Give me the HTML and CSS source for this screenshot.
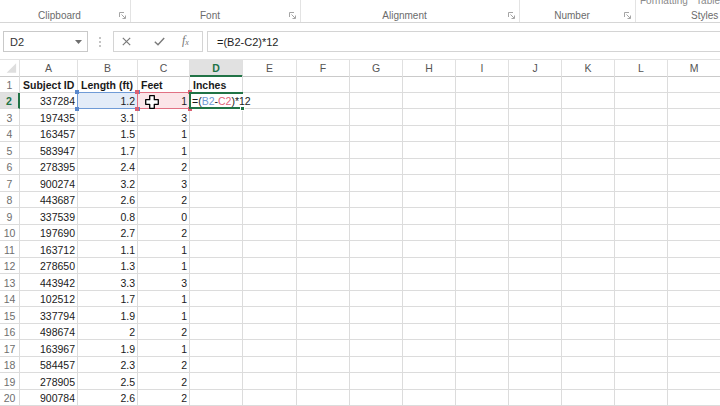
FILE: index.html
```html
<!DOCTYPE html>
<html>
<head>
<meta charset="utf-8">
<title>Excel sheet</title>
<link rel="stylesheet" href="styles.css">
</head>
<body>
<div class="app">
  <div class="ribbon">
    <div class="group g-clip">
      <div class="cmds"></div>
      <div class="gfoot"><span class="glabel">Clipboard</span><svg class="launch" viewBox="0 0 7 7"><path d="M0.5 5V0.5H5" fill="none" stroke="#a5a5a5"/><path d="M2.5 2.5L6.2 6.2M6.5 3.5V6.5H3.5" fill="none" stroke="#a5a5a5"/></svg></div>
    </div>
    <div class="group g-font">
      <div class="cmds"></div>
      <div class="gfoot"><span class="glabel">Font</span><svg class="launch" viewBox="0 0 7 7"><path d="M0.5 5V0.5H5" fill="none" stroke="#a5a5a5"/><path d="M2.5 2.5L6.2 6.2M6.5 3.5V6.5H3.5" fill="none" stroke="#a5a5a5"/></svg></div>
    </div>
    <div class="group g-align">
      <div class="cmds"></div>
      <div class="gfoot"><span class="glabel">Alignment</span><svg class="launch" viewBox="0 0 7 7"><path d="M0.5 5V0.5H5" fill="none" stroke="#a5a5a5"/><path d="M2.5 2.5L6.2 6.2M6.5 3.5V6.5H3.5" fill="none" stroke="#a5a5a5"/></svg></div>
    </div>
    <div class="group g-num">
      <div class="cmds"></div>
      <div class="gfoot"><span class="glabel">Number</span><svg class="launch" viewBox="0 0 7 7"><path d="M0.5 5V0.5H5" fill="none" stroke="#a5a5a5"/><path d="M2.5 2.5L6.2 6.2M6.5 3.5V6.5H3.5" fill="none" stroke="#a5a5a5"/></svg></div>
    </div>
    <div class="group g-styles">
      <div class="cmds"><span class="cmd-fmt">Formatting</span><span class="cmd-ta">Table</span></div>
      <div class="gfoot"><span class="glabel styles-label">Styles</span></div>
    </div>
  </div>

  <div class="fbar">
    <div class="namebox"><span>D2</span><svg class="dd" viewBox="0 0 7 4"><polygon points="0,0 7,0 3.5,4" fill="#6e6e6e"/></svg></div>
    <div class="grip"><i></i><i></i><i></i></div>
    <div class="fbtns">
      <svg class="ic-x" viewBox="0 0 9 9"><path d="M0.8 0.8L8.2 8.2M8.2 0.8L0.8 8.2" stroke="#7a7a7a" stroke-width="1.2" fill="none"/></svg>
      <svg class="ic-ok" viewBox="0 0 11 9"><path d="M0.8 4.8L4 7.8L10.2 1" stroke="#7a7a7a" stroke-width="1.4" fill="none"/></svg>
      <span class="fx">f<sub>x</sub></span>
    </div>
    <div class="finput">=(B2-C2)*12</div>
  </div>

  <div class="sheet">
    <div class="row head">
      <span class="corner"><svg viewBox="0 0 20 16" width="20" height="16"><polygon points="17,3 17,13 7,13" fill="#dedede"/></svg></span>
      <span>A</span><span>B</span><span>C</span><span class="sel">D</span><span>E</span><span>F</span><span>G</span><span>H</span><span>I</span><span>J</span><span>K</span><span>L</span><span>M</span>
    </div>
    <div class="row">
      <span class="rh">1</span><span class="c b">Subject ID</span><span class="c b">Length (ft)</span><span class="c b">Feet</span><span class="c b">Inches</span><span class="c"></span><span class="c"></span><span class="c"></span><span class="c"></span><span class="c"></span><span class="c"></span><span class="c"></span><span class="c"></span><span class="c"></span>
    </div>
    <div class="row">
      <span class="rh sel">2</span><span class="c n">337284</span>
      <span class="c n rb">1.2<i class="h tl"></i><i class="h tr"></i><i class="h bl"></i><i class="h br"></i></span>
      <span class="c n rc">1<i class="h tl"></i><i class="h tr"></i><i class="h bl"></i><i class="h br"></i><svg class="cursor" viewBox="0 0 14 14"><path d="M4.7 0.7H9.3V4.7H13.3V9.3H9.3V13.3H4.7V9.3H0.7V4.7H4.7Z" fill="#fff" stroke="#000" stroke-width="1.3" stroke-linejoin="round"/></svg></span>
      <span class="c act"><span class="edit">=(<span class="ref-b">B2</span>-<span class="ref-c">C2</span>)*12</span><i class="fill"></i></span>
      <span class="c"></span><span class="c"></span><span class="c"></span><span class="c"></span><span class="c"></span><span class="c"></span><span class="c"></span><span class="c"></span><span class="c"></span>
    </div>
    <div class="row"><span class="rh">3</span><span class="c n">197435</span><span class="c n">3.1</span><span class="c n">3</span><span class="c"></span><span class="c"></span><span class="c"></span><span class="c"></span><span class="c"></span><span class="c"></span><span class="c"></span><span class="c"></span><span class="c"></span><span class="c"></span></div>
    <div class="row"><span class="rh">4</span><span class="c n">163457</span><span class="c n">1.5</span><span class="c n">1</span><span class="c"></span><span class="c"></span><span class="c"></span><span class="c"></span><span class="c"></span><span class="c"></span><span class="c"></span><span class="c"></span><span class="c"></span><span class="c"></span></div>
    <div class="row"><span class="rh">5</span><span class="c n">583947</span><span class="c n">1.7</span><span class="c n">1</span><span class="c"></span><span class="c"></span><span class="c"></span><span class="c"></span><span class="c"></span><span class="c"></span><span class="c"></span><span class="c"></span><span class="c"></span><span class="c"></span></div>
    <div class="row"><span class="rh">6</span><span class="c n">278395</span><span class="c n">2.4</span><span class="c n">2</span><span class="c"></span><span class="c"></span><span class="c"></span><span class="c"></span><span class="c"></span><span class="c"></span><span class="c"></span><span class="c"></span><span class="c"></span><span class="c"></span></div>
    <div class="row"><span class="rh">7</span><span class="c n">900274</span><span class="c n">3.2</span><span class="c n">3</span><span class="c"></span><span class="c"></span><span class="c"></span><span class="c"></span><span class="c"></span><span class="c"></span><span class="c"></span><span class="c"></span><span class="c"></span><span class="c"></span></div>
    <div class="row"><span class="rh">8</span><span class="c n">443687</span><span class="c n">2.6</span><span class="c n">2</span><span class="c"></span><span class="c"></span><span class="c"></span><span class="c"></span><span class="c"></span><span class="c"></span><span class="c"></span><span class="c"></span><span class="c"></span><span class="c"></span></div>
    <div class="row"><span class="rh">9</span><span class="c n">337539</span><span class="c n">0.8</span><span class="c n">0</span><span class="c"></span><span class="c"></span><span class="c"></span><span class="c"></span><span class="c"></span><span class="c"></span><span class="c"></span><span class="c"></span><span class="c"></span><span class="c"></span></div>
    <div class="row"><span class="rh">10</span><span class="c n">197690</span><span class="c n">2.7</span><span class="c n">2</span><span class="c"></span><span class="c"></span><span class="c"></span><span class="c"></span><span class="c"></span><span class="c"></span><span class="c"></span><span class="c"></span><span class="c"></span><span class="c"></span></div>
    <div class="row"><span class="rh">11</span><span class="c n">163712</span><span class="c n">1.1</span><span class="c n">1</span><span class="c"></span><span class="c"></span><span class="c"></span><span class="c"></span><span class="c"></span><span class="c"></span><span class="c"></span><span class="c"></span><span class="c"></span><span class="c"></span></div>
    <div class="row"><span class="rh">12</span><span class="c n">278650</span><span class="c n">1.3</span><span class="c n">1</span><span class="c"></span><span class="c"></span><span class="c"></span><span class="c"></span><span class="c"></span><span class="c"></span><span class="c"></span><span class="c"></span><span class="c"></span><span class="c"></span></div>
    <div class="row"><span class="rh">13</span><span class="c n">443942</span><span class="c n">3.3</span><span class="c n">3</span><span class="c"></span><span class="c"></span><span class="c"></span><span class="c"></span><span class="c"></span><span class="c"></span><span class="c"></span><span class="c"></span><span class="c"></span><span class="c"></span></div>
    <div class="row"><span class="rh">14</span><span class="c n">102512</span><span class="c n">1.7</span><span class="c n">1</span><span class="c"></span><span class="c"></span><span class="c"></span><span class="c"></span><span class="c"></span><span class="c"></span><span class="c"></span><span class="c"></span><span class="c"></span><span class="c"></span></div>
    <div class="row"><span class="rh">15</span><span class="c n">337794</span><span class="c n">1.9</span><span class="c n">1</span><span class="c"></span><span class="c"></span><span class="c"></span><span class="c"></span><span class="c"></span><span class="c"></span><span class="c"></span><span class="c"></span><span class="c"></span><span class="c"></span></div>
    <div class="row"><span class="rh">16</span><span class="c n">498674</span><span class="c n">2</span><span class="c n">2</span><span class="c"></span><span class="c"></span><span class="c"></span><span class="c"></span><span class="c"></span><span class="c"></span><span class="c"></span><span class="c"></span><span class="c"></span><span class="c"></span></div>
    <div class="row"><span class="rh">17</span><span class="c n">163967</span><span class="c n">1.9</span><span class="c n">1</span><span class="c"></span><span class="c"></span><span class="c"></span><span class="c"></span><span class="c"></span><span class="c"></span><span class="c"></span><span class="c"></span><span class="c"></span><span class="c"></span></div>
    <div class="row"><span class="rh">18</span><span class="c n">584457</span><span class="c n">2.3</span><span class="c n">2</span><span class="c"></span><span class="c"></span><span class="c"></span><span class="c"></span><span class="c"></span><span class="c"></span><span class="c"></span><span class="c"></span><span class="c"></span><span class="c"></span></div>
    <div class="row"><span class="rh">19</span><span class="c n">278905</span><span class="c n">2.5</span><span class="c n">2</span><span class="c"></span><span class="c"></span><span class="c"></span><span class="c"></span><span class="c"></span><span class="c"></span><span class="c"></span><span class="c"></span><span class="c"></span><span class="c"></span></div>
    <div class="row"><span class="rh">20</span><span class="c n">900784</span><span class="c n">2.6</span><span class="c n">2</span><span class="c"></span><span class="c"></span><span class="c"></span><span class="c"></span><span class="c"></span><span class="c"></span><span class="c"></span><span class="c"></span><span class="c"></span><span class="c"></span></div>
  </div>
</div>
</body>
</html>
```

FILE: styles.css
```css
* { box-sizing: border-box; margin: 0; padding: 0; }

html, body {
  width: 720px;
  height: 406px;
  overflow: hidden;
  background: #ffffff;
}

body {
  font-family: "Liberation Sans", Arial, sans-serif;
  color: #1e1e1e;
}

.app {
  width: 720px;
  height: 406px;
  overflow: hidden;
}

/* ---------- Ribbon ---------- */
.ribbon {
  display: flex;
  height: 23px;
  border-bottom: 1px solid #d6d6d6;
  background: #ffffff;
}

.group {
  display: flex;
  flex-direction: column;
  justify-content: space-between;
  height: 22px;
  border-right: 1px solid #e3e3e3;
}

.g-clip { width: 131px; }
.g-font { width: 170px; }
.g-align { width: 219px; }
.g-num { width: 116px; }
.g-styles { flex: 1; border-right: none; overflow: hidden; }

.cmds {
  height: 8px;
  display: flex;
  font-size: 10px;
  line-height: 12px;
  color: #8a8a8a;
}

.g-styles .cmds { margin-top: -5px; height: 13px; padding-left: 4px; }
.cmd-fmt { width: 67px; }

.gfoot {
  display: flex;
  align-items: center;
  height: 14px;
}

.glabel {
  flex: 1;
  text-align: center;
  font-size: 10px;
  line-height: 12px;
  margin-top: 1px;
  color: #6b6b6b;
}

.styles-label {
  text-align: left;
  padding-left: 55px;
}

.launch {
  width: 7px;
  height: 7px;
  margin-right: 4px;
  margin-top: 1px;
  flex: none;
}

/* ---------- Formula bar ---------- */
.fbar {
  display: flex;
  align-items: center;
  height: 37px;
  padding-top: 8px;
  padding-bottom: 7px;
  border-bottom: 1px solid #e2e2e2;
}

.namebox {
  display: flex;
  align-items: center;
  margin-left: 3px;
  width: 85px;
  height: 21px;
  border: 1px solid #c9c9c9;
  padding-left: 6px;
  font-size: 11px;
  color: #333333;
}

.dd {
  width: 7px;
  height: 4px;
  margin-left: auto;
  margin-right: 5px;
}

.grip {
  display: flex;
  flex-direction: column;
  gap: 2px;
  margin-left: 11px;
  width: 2px;
}

.grip i {
  display: block;
  width: 2px;
  height: 2px;
  background: #c4c4c4;
}

.fbtns {
  display: flex;
  align-items: center;
  margin-left: 12px;
  width: 90px;
  height: 21px;
  border: 1px solid #d4d4d4;
}

.ic-x { width: 9px; height: 9px; margin-left: 8px; }
.ic-ok { width: 11px; height: 9px; margin-left: 23px; }

.fx {
  margin-left: 17px;
  font-family: "Liberation Serif", "Times New Roman", serif;
  font-style: italic;
  font-size: 12px;
  color: #777777;
  line-height: 12px;
}

.fx sub { font-size: 8px; vertical-align: -1px; }

.finput {
  flex: 1;
  display: flex;
  align-items: center;
  margin-left: 4px;
  height: 21px;
  border: 1px solid #d4d4d4;
  border-right: none;
  padding-left: 9px;
  font-size: 11px;
  color: #1e1e1e;
}

/* ---------- Sheet ---------- */
.sheet {
  width: 720px;
}

.row {
  display: grid;
  grid-template-columns: 20px 58px 60px 52px 53px 54px repeat(8, 53px);
  height: 16.5px;
}

.row > span {
  position: relative;
  display: flex;
  align-items: flex-end;
  white-space: nowrap;
  border-right: 1px solid #dcdcdc;
  border-bottom: 1px solid #dcdcdc;
  padding: 0 2px 1px 3px;
  font-size: 10.5px;
  line-height: 12px;
  color: #1a1a1a;
}

.c.n { justify-content: flex-end; }
.c.b { font-weight: bold; }

.rh {
  justify-content: center;
  color: #6e6e6e !important;
  padding: 0 0 1px 0 !important;
}

.rh.sel {
  background: #e1e1e1;
  color: #217346 !important;
  font-weight: bold;
  border-right: 2px solid #217346 !important;
}

.head { height: 16px; }

.head > span {
  align-items: center;
  justify-content: center;
  padding: 0;
  color: #555555;
  border-bottom-color: #cacaca;
  border-right-color: #e0e0e0;
}

.head > span.sel {
  background: #e1e1e1;
  color: #217346;
  font-weight: bold;
  border-bottom: 2px solid #217346;
}

.corner { padding: 0 !important; }
.corner svg { display: block; }

/* Range highlights */
.rb { background: #e3ecf8; }
.rc { background: #fbe5e8; }

.rb::before,
.rc::before {
  content: "";
  position: absolute;
  top: -1px;
  left: -1px;
  right: -1px;
  bottom: -1px;
  z-index: 1;
  pointer-events: none;
}

.rb::before { border: 1px solid #6f9bd6; }
.rc::before { border: 1px solid #e17284; }

.h {
  position: absolute;
  width: 4px;
  height: 4px;
  z-index: 2;
}

.rb .h { background: #5a88cc; }
.rc .h { background: #db5f72; }

.h.tl { top: -3px; left: -3px; }
.h.tr { top: -3px; right: -3px; }
.h.bl { bottom: -3px; left: -3px; }
.h.br { bottom: -3px; right: -3px; }

.cursor {
  position: absolute;
  left: 7px;
  top: 2.5px;
  width: 14px;
  height: 14px;
  z-index: 6;
}

/* Active editing cell */
.act::before {
  content: "";
  position: absolute;
  top: -1px;
  left: -1px;
  right: -1px;
  bottom: -1px;
  border: 2px solid #217346;
  z-index: 3;
}

.edit {
  position: absolute;
  left: 1px;
  top: 1px;
  bottom: 1px;
  width: 61px;
  display: flex;
  align-items: flex-end;
  padding-left: 1px;
  background: #ffffff;
  z-index: 4;
  font-size: 10.5px;
  line-height: 12px;
  color: #1a1a1a;
}

.ref-b { color: #6f9bd6; }
.ref-c { color: #df6479; }

.fill {
  position: absolute;
  right: -3px;
  bottom: -3px;
  width: 5px;
  height: 5px;
  background: #217346;
  border: 1px solid #ffffff;
  z-index: 5;
}
```
